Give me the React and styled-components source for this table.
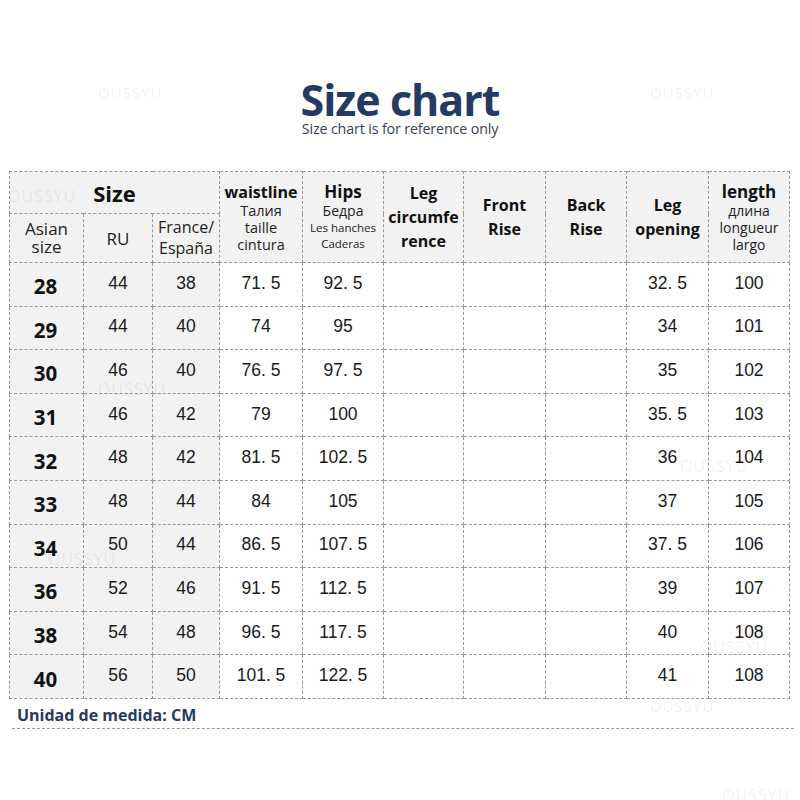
import React from 'react';
import styled, { createGlobalStyle } from 'styled-components';

const navy = '#253a63';
const line = '#9a9a9a';
const shade = '#f2f2f2';

const GlobalStyle = createGlobalStyle`
  html, body {
    margin: 0;
    padding: 0;
    background: #fff;
  }
  body {
    font-family: 'Liberation Sans', Arial, sans-serif;
    color: #111;
  }
`;

const Page = styled.div`
  position: relative;
  width: 800px;
  height: 800px;
  overflow: hidden;
  background: #fff;
  padding-top: 78px;
  box-sizing: border-box;
`;

const Heading = styled.div`
  display: flex;
  flex-direction: column;
  align-items: center;
  height: 93px;

  h1 {
    margin: 0;
    font-family: 'Open Sans', 'Noto Sans', sans-serif;
    font-weight: 700;
    font-size: 43px;
    line-height: 44px;
    letter-spacing: -1px;
    color: ${navy};
  }

  p {
    margin: 0;
    font-family: 'Open Sans', 'Noto Sans', sans-serif;
    font-size: 14.3px;
    line-height: 14px;
    color: #3b4256;
    letter-spacing: -0.15px;
  }
`;

const Table = styled.table`
  margin-left: 9px;
  width: 780px;
  border-collapse: collapse;
  table-layout: fixed;
`;

const Cell = styled.td`
  border: 1px dashed ${line};
  background: ${(p) => (p.$shade ? shade : '#fff')};
  text-align: center;
  vertical-align: middle;
  padding: 0;
`;

const HeadCell = styled(Cell)`
  font-family: 'Open Sans', 'Noto Sans', sans-serif;
  font-weight: 700;
  font-size: ${(p) => p.$size || 16}px;
  line-height: ${(p) => p.$lh || 24}px;
  color: #111;
`;

const Sub = styled.div`
  font-family: 'Open Sans', 'Noto Sans', sans-serif;
  font-weight: 400;
  font-size: ${(p) => p.$size || 14}px;
  line-height: ${(p) => p.$lh || 16}px;
  color: #222;
`;

const Row = styled.tr`
  height: ${(p) => p.$h}px;
`;

const SizeCell = styled(Cell)`
  font-family: 'Open Sans', 'Noto Sans', sans-serif;
  font-weight: 700;
  font-size: 20.5px;
  padding-top: 4px;
  padding-right: 2px;
`;

const NumCell = styled(Cell)`
  font-family: 'Liberation Sans', Arial, sans-serif;
  font-size: 17.5px;
  padding-bottom: 2px;
  color: #1a1a1a;
`;

const Footer = styled.div`
  margin: 6px 0 0 12px;
  width: 777px;
  border-bottom: 1px dashed ${line};
  padding: 0 0 3px 5px;
  font-family: 'Open Sans', 'Noto Sans', sans-serif;
  font-weight: 700;
  font-size: 16px;
  line-height: 20px;
  color: ${navy};
`;

const Mark = styled.span`
  position: absolute;
  left: ${(p) => p.$x}px;
  top: ${(p) => p.$y}px;
  font-family: 'Open Sans', 'Noto Sans', sans-serif;
  font-size: ${(p) => p.$size || 15}px;
  line-height: 1;
  letter-spacing: 1px;
  color: rgba(0, 0, 0, 0.07);
  pointer-events: none;
`;

const widths = [74, 69, 67, 83, 81, 80, 82, 81, 82, 81];

const rows = [
  ['28', '44', '38', '71. 5', '92. 5', '32. 5', '100'],
  ['29', '44', '40', '74', '95', '34', '101'],
  ['30', '46', '40', '76. 5', '97. 5', '35', '102'],
  ['31', '46', '42', '79', '100', '35. 5', '103'],
  ['32', '48', '42', '81. 5', '102. 5', '36', '104'],
  ['33', '48', '44', '84', '105', '37', '105'],
  ['34', '50', '44', '86. 5', '107. 5', '37. 5', '106'],
  ['36', '52', '46', '91. 5', '112. 5', '39', '107'],
  ['38', '54', '48', '96. 5', '117. 5', '40', '108'],
  ['40', '56', '50', '101. 5', '122. 5', '41', '108'],
];

const marks = [
  [98, 85, 15],
  [650, 85, 15],
  [8, 188, 16],
  [98, 381, 16],
  [680, 458, 16],
  [48, 551, 16],
  [700, 639, 16],
  [650, 699, 15],
  [722, 787, 16],
];

export default function App() {
  return (
    <Page>
      <GlobalStyle />
      <Heading>
        <h1>Size chart</h1>
        <p>Size chart is for reference only</p>
      </Heading>
      <Table>
        <colgroup>
          {widths.map((w, i) => (
            <col key={i} style={{ width: w }} />
          ))}
        </colgroup>
        <thead>
          <Row $h={42}>
            <HeadCell as="th" colSpan={3} $shade $size={22}>
              Size
            </HeadCell>
            <HeadCell as="th" rowSpan={2} $shade $size={16} $lh={20}>
              waistline
              <Sub $size={14.5} $lh={17}>Талия</Sub>
              <Sub $size={14.5} $lh={17}>taille</Sub>
              <Sub $size={14.5} $lh={17}>cintura</Sub>
            </HeadCell>
            <HeadCell as="th" rowSpan={2} $shade $size={17} $lh={20}>
              Hips
              <Sub $size={14} $lh={18}>Бедра</Sub>
              <Sub $size={11.5} $lh={16}>Les hanches</Sub>
              <Sub $size={11.5} $lh={16}>Caderas</Sub>
            </HeadCell>
            <HeadCell as="th" rowSpan={2} $shade>
              Leg
              <br />
              circumfe
              <br />
              rence
            </HeadCell>
            <HeadCell as="th" rowSpan={2} $shade>
              Front
              <br />
              Rise
            </HeadCell>
            <HeadCell as="th" rowSpan={2} $shade>
              Back
              <br />
              Rise
            </HeadCell>
            <HeadCell as="th" rowSpan={2} $shade>
              Leg
              <br />
              opening
            </HeadCell>
            <HeadCell as="th" rowSpan={2} $shade $size={17} $lh={20}>
              length
              <Sub $size={14} $lh={17}>длина</Sub>
              <Sub $size={14} $lh={17}>longueur</Sub>
              <Sub $size={14} $lh={17}>largo</Sub>
            </HeadCell>
          </Row>
          <Row $h={49}>
            <HeadCell as="th" $shade>
              <Sub $size={17} $lh={18}>Asian</Sub>
              <Sub $size={17} $lh={18}>size</Sub>
            </HeadCell>
            <HeadCell as="th" $shade>
              <Sub $size={17} $lh={19}>RU</Sub>
            </HeadCell>
            <HeadCell as="th" $shade>
              <Sub $size={16} $lh={21}>France/</Sub>
              <Sub $size={16} $lh={21}>España</Sub>
            </HeadCell>
          </Row>
        </thead>
        <tbody>
          {rows.map((r) => (
            <Row key={r[0]} $h={43.6}>
              <SizeCell $shade>{r[0]}</SizeCell>
              <NumCell $shade>{r[1]}</NumCell>
              <NumCell $shade>{r[2]}</NumCell>
              <NumCell>{r[3]}</NumCell>
              <NumCell>{r[4]}</NumCell>
              <NumCell />
              <NumCell />
              <NumCell />
              <NumCell>{r[5]}</NumCell>
              <NumCell>{r[6]}</NumCell>
            </Row>
          ))}
        </tbody>
      </Table>
      <Footer>Unidad de medida: CM</Footer>
      {marks.map(([x, y, s], i) => (
        <Mark key={i} $x={x} $y={y} $size={s}>
          OUSSYU
        </Mark>
      ))}
    </Page>
  );
}
